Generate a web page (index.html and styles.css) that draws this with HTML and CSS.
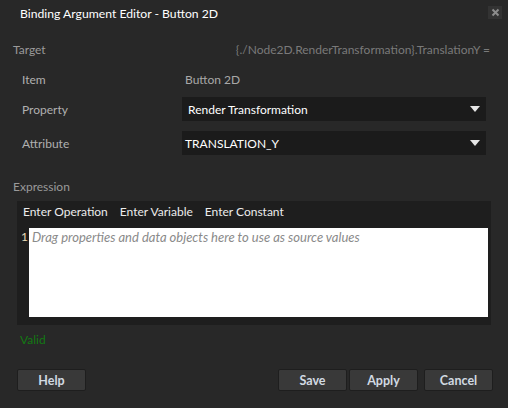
FILE: index.html
```html
<!DOCTYPE html>
<html>
<head>
<meta charset="utf-8">
<link rel="stylesheet" href="styles.css">
</head>
<body>
<div class="dialog">
  <div class="titlebar">
    <span class="title">Binding Argument Editor - Button 2D</span>
    <span class="close"><svg width="9" height="9" viewBox="0 0 9 9"><path d="M1.5 1.5L7.5 7.5M7.5 1.5L1.5 7.5" stroke="#8c8c8c" stroke-width="2"/></svg></span>
  </div>
  <div class="target-row">
    <span class="section-label">Target</span>
    <span class="path">{./Node2D.RenderTransformation}.TranslationY =</span>
  </div>
  <div class="field-row item-row">
    <span class="field-label">Item</span>
    <span class="field-value">Button 2D</span>
  </div>
  <div class="field-row prop-row">
    <span class="field-label">Property</span>
    <div class="dropdown"><span>Render Transformation</span><span class="arrow"></span></div>
  </div>
  <div class="field-row attr-row">
    <span class="field-label">Attribute</span>
    <div class="dropdown"><span class="attr-text">TRANSLATION_Y</span><span class="arrow"></span></div>
  </div>
  <div class="section-label expr-label">Expression</div>
  <div class="expr-box">
    <div class="toolbar">
      <span>Enter Operation</span>
      <span>Enter Variable</span>
      <span>Enter Constant</span>
    </div>
    <div class="editor">
      <span class="line-no">1</span>
      <div class="editor-area"><span class="placeholder">Drag properties and data objects here to use as source values</span></div>
    </div>
  </div>
  <div class="valid">Valid</div>
  <div class="buttons">
    <button class="btn">Help</button>
    <div class="spacer"></div>
    <button class="btn">Save</button>
    <button class="btn apply">Apply</button>
    <button class="btn cancel">Cancel</button>
  </div>
</div>
</body>
</html>
```

FILE: styles.css
```css
html, body {
  margin: 0;
  padding: 0;
  background: #282828;
}
body {
  font-family: Lato, "Open Sans", sans-serif;
  font-size: 12px;
  color: #b4b4b4;
}
.dialog {
  width: 508px;
  height: 408px;
  display: flex;
  flex-direction: column;
}
.titlebar {
  height: 26px;
  display: flex;
  align-items: center;
  padding: 0 6px 0 20px;
}
.title {
  color: #ffffff;
  flex: 1;
  font-size: 12.2px;
}
.close {
  width: 14px;
  height: 13px;
  background: #333333;
  display: flex;
  align-items: center;
  justify-content: center;
  align-self: flex-start;
  margin-top: 6px;
}
.target-row {
  display: flex;
  justify-content: space-between;
  align-items: center;
  height: 18px;
  margin-top: 14px;
  padding: 0 18px 0 13px;
}
.section-label {
  color: #9a9a9a;
  font-size: 12px;
}
.path {
  color: #7a7a7a;
}
.field-row {
  display: flex;
  align-items: center;
  height: 24px;
  padding-left: 22px;
}
.item-row {
  margin-top: 9px;
}
.prop-row {
  margin-top: 6px;
}
.attr-row {
  margin-top: 10px;
}
.field-label {
  width: 160px;
  color: #b0b0b0;
}
.field-value {
  color: #a8a8a8;
  padding-left: 3px;
}
.dropdown {
  width: 304px;
  height: 24px;
  background: #1b1b1b;
  display: flex;
  align-items: center;
  justify-content: space-between;
  padding: 0 3px 0 6px;
  box-sizing: border-box;
  color: #ffffff;
}
.attr-text {
  margin-left: -3px;
}
.arrow {
  width: 0;
  height: 0;
  border-left: 5px solid transparent;
  border-right: 5px solid transparent;
  border-top: 6px solid #e6e6e6;
  margin-right: 3px;
}
.expr-label {
  margin-top: 24px;
  padding-left: 13px;
  height: 16px;
  line-height: 16px;
}
.expr-box {
  margin: 6px 0 0 17px;
  width: 474px;
  height: 124px;
  background: #1e1e1e;
  display: flex;
  flex-direction: column;
}
.toolbar {
  height: 27px;
  box-sizing: border-box;
  display: flex;
  align-items: flex-start;
  gap: 12px;
  padding: 3px 0 0 6px;
  line-height: 16px;
  color: #ececec;
}
.editor {
  display: flex;
  height: 89px;
}
.line-no {
  width: 12px;
  padding-left: 4px;
  box-sizing: border-box;
  color: #e8dcb8;
  line-height: 18px;
}
.editor-area {
  width: 459px;
  height: 89px;
  background: #ffffff;
  padding-left: 3px;
  line-height: 18px;
  box-sizing: border-box;
}
.placeholder {
  font-style: italic;
  color: #8a8a8a;
  font-size: 13px;
}
.valid {
  margin: 7px 0 0 20px;
  color: #137a13;
  height: 16px;
  line-height: 16px;
}
.buttons {
  display: flex;
  margin-top: 21px;
  padding-left: 17px;
}
.spacer {
  width: 192px;
}
.btn {
  width: 69px;
  height: 22px;
  background: #393939;
  border: 1px solid #1e1e1e;
  border-radius: 2px;
  color: #d2dae2;
  font-family: Lato, "Open Sans", sans-serif;
  font-size: 12.5px;
  font-weight: bold;
  padding: 0;
}
.apply {
  margin-left: 2px;
}
.cancel {
  margin-left: 6px;
}
```
